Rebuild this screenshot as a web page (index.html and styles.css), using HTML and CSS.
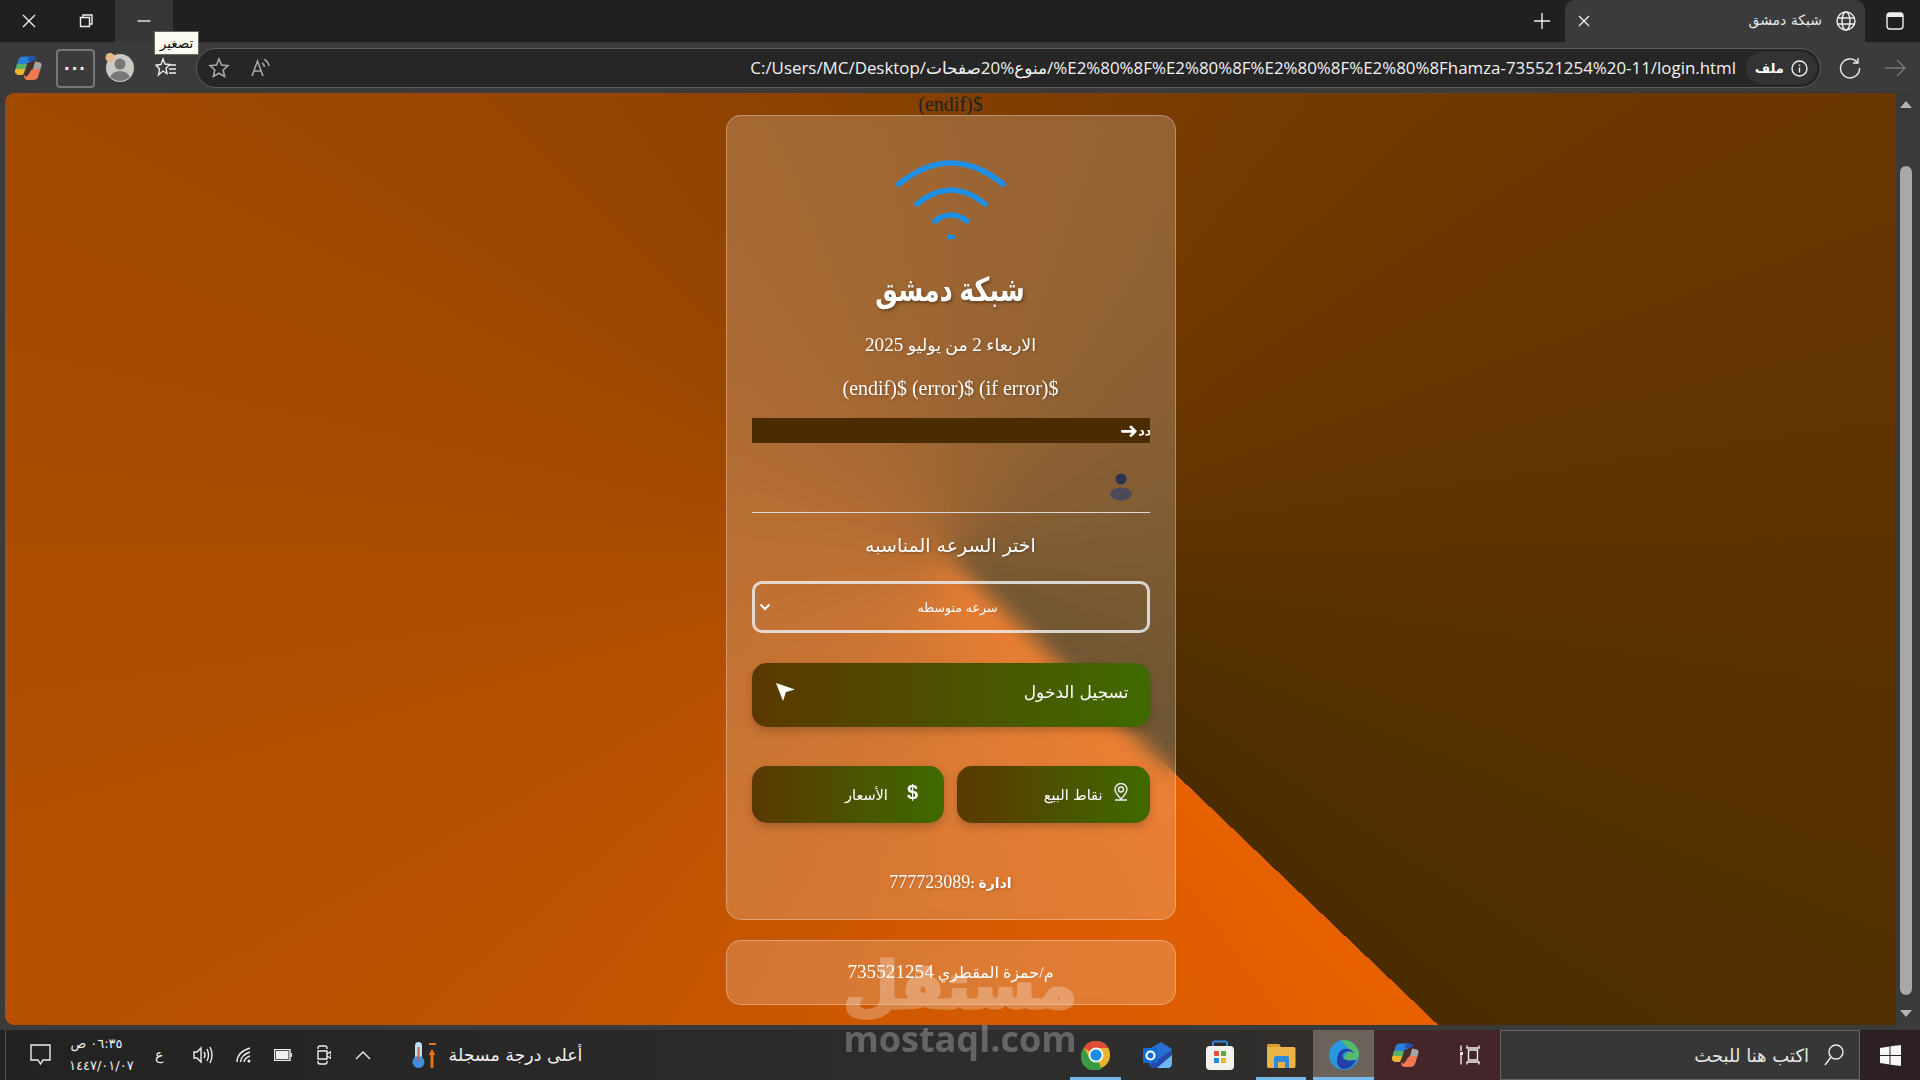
FILE: index.html
```html
<!DOCTYPE html>
<html lang="ar">
<head>
<meta charset="utf-8">
<title>شبكة دمشق</title>
<link rel="stylesheet" href="styles.css">
</head>
<body>
<svg class="defs" width="0" height="0">
  <symbol id="copilot" viewBox="0 0 28 26">
    <path d="M3 9 5 3.500Q6 1.500 8.500 1.500H19Q21.500 1.500 22 4L16 7 12 9Z" fill="#2a7fd8"/>
    <path d="M15 1.500H19Q21.500 1.500 22 4L18 6H14Z" fill="#2450b8"/>
    <path d="M3 9H13L11.500 14H1.500Z" fill="#58b368"/>
    <path d="M1.500 14H11.500L9 20H5Q1 20 .8 16Z" fill="#e8b52e"/>
    <path d="M21 6.500 26 7.500Q28 8 27.500 11L26.500 14H19Z" fill="#a4a4a4"/>
    <path d="M19 14H26.500L24 22Q23 25 19 25H13Q11 25 10 22L11 19Z" fill="#ee7a52"/>
    <path d="M10.500 20 14 8 19 6 21 7 15 19 12 22Z" fill="#4a2f26"/>
  </symbol>
  <symbol id="chrome" viewBox="0 0 32 32">
    <circle cx="16" cy="16" r="15" fill="#e8b52e"/>
    <path d="M3 8.500A15 15 0 0 1 29 8.500H16A7.500 7.500 0 0 0 9.500 12.300Z" fill="#e34a35"/>
    <path d="M3 8.500 9.500 19.800 16 16 22 31A15 15 0 0 1 3 8.500Z" fill="#3c9a45"/>
    <circle cx="16" cy="16" r="8" fill="#f4f6f8"/>
    <circle cx="16" cy="16" r="6" fill="#1c8fe0"/>
  </symbol>
</svg>

<header class="tabstrip">
  <div class="win-btn"><svg width="16" height="16" viewBox="0 0 16 16"><path d="M2 2 14 14M14 2 2 14" class="ln"/></svg></div>
  <div class="win-btn"><svg width="16" height="16" viewBox="0 0 16 16"><path d="M2.500 4.500H11.500V13.500H2.500ZM5 4V2H14V11H12" class="ln"/></svg></div>
  <div class="win-btn is-hover"><svg width="16" height="16" viewBox="0 0 16 16"><path d="M1.500 8H14.500" class="ln"/></svg></div>
  <div class="tab-spacer"></div>
  <svg class="newtab" width="18" height="18" viewBox="0 0 18 18"><path d="M9 1V17M1 9H17" class="ln"/></svg>
  <div class="tab">
    <svg width="12" height="12" viewBox="0 0 12 12"><path d="M1 1 11 11M11 1 1 11" class="ln"/></svg>
    <span class="tab-title">شبكة دمشق</span>
    <svg width="20" height="20" viewBox="0 0 20 20"><g class="ln"><circle cx="10" cy="10" r="9"/><ellipse cx="10" cy="10" rx="4" ry="9"/><path d="M1.500 7H18.500M1.500 13H18.500"/></g></svg>
  </div>
  <div class="tab-actions"><svg width="18" height="18" viewBox="0 0 18 18"><rect x="1" y="1" width="16" height="16" rx="3" class="ln"/><path d="M1 3Q1 1 3 1H15Q17 1 17 3V5H1Z" fill="#eee"/></svg></div>
</header>

<div class="toolbar">
  <svg class="tb-copilot" width="28" height="26"><use href="#copilot"/></svg>
  <div class="more-btn">···</div>
  <div class="profile">
    <svg width="30" height="30" viewBox="0 0 30 30"><circle cx="15" cy="15" r="14" fill="#ccc8c4"/><circle cx="15" cy="11" r="5.500" fill="#777"/><path d="M5 24Q8 18 15 18T25 24Q20 28 15 28T5 24Z" fill="#777"/><circle cx="5" cy="4.500" r="4.500" fill="#e8b98a"/></svg>
  </div>
  <svg class="favs" width="22" height="22" viewBox="0 0 22 22"><path d="M8 2 10 7 15 7.500 11 11 12 16.500 8 14 3.500 18 4.500 12 1 8 6 7.500Z" class="ln"/><path d="M14 8H21M14 12H21M14 16H21" class="ln"/></svg>
  <div class="addr">
    <svg width="22" height="22" viewBox="0 0 22 22"><path d="M11 2 13.600 8 20 8.600 15.200 13 16.600 19.500 11 16.200 5.400 19.500 6.800 13 2 8.600 8.400 8Z" class="ln dim"/></svg>
    <svg class="read" width="20" height="20" viewBox="0 0 20 20"><path d="M1 18 6.500 3 12 18M3 13H10M11 5Q13 6 13.500 9M13 1.500Q17 3 18 8" class="ln dim"/></svg>
    <div class="url" dir="ltr">C:/Users/MC/Desktop/منوع%20صفحات/%E2%80%8F%E2%80%8F%E2%80%8F%E2%80%8Fhamza-735521254%20-11/login.html</div>
    <div class="file-pill">
      <span class="file-label">ملف</span>
      <svg width="17" height="17" viewBox="0 0 17 17"><circle cx="8.500" cy="8.500" r="7.500" class="ln"/><path d="M8.500 7.500V12.500M8.500 4.500V6" class="ln"/></svg>
    </div>
  </div>
  <svg class="refresh" width="22" height="22" viewBox="0 0 22 22"><path d="M18 5A9.500 9.500 0 1 0 20.500 11M19 1V6H14" class="ln"/></svg>
  <svg class="forward" width="22" height="18" viewBox="0 0 22 18"><path d="M1 9H21M13 1 21 9 13 17" class="ln gray"/></svg>
</div>

<div class="stage">
  <main class="page">
    <div class="stray">(endif)$</div>
    <section class="card">
      <svg class="wifi" width="120" height="90" viewBox="0 0 120 90">
        <g class="wifi-arcs">
          <path d="M8 29Q60 -13 112 29"/>
          <path d="M26 49Q60 21 94 49"/>
          <path d="M44 66Q60 54 76 66"/>
        </g>
        <ellipse cx="60" cy="82" rx="4.500" ry="2.500" fill="#1e90e6"/>
      </svg>
      <h1 class="title"><span class="title-text">شبكة دمشق</span></h1>
      <p class="date">الاربعاء <span class="num">2</span> من يوليو <span class="num">2025</span></p>
      <p class="errors" dir="ltr">(endif)$ (error)$ (if error)$</p>
      <div class="ticker"><span class="ticker-arrow">➜</span><span class="ticker-text">دد</span></div>
      <div class="field">
        <svg width="24" height="30" viewBox="0 0 24 30"><circle cx="12" cy="7" r="5.500" fill="#2e3350"/><ellipse cx="12" cy="22" rx="11" ry="6.500" fill="#4a4a5a"/></svg>
      </div>
      <div class="speed-label">اختر السرعه المناسبه</div>
      <div class="select">
        <svg class="chev" width="12" height="8" viewBox="0 0 12 8"><path d="M1.500 1.500 6 6 10.500 1.500" fill="none" stroke="#fff" stroke-width="2"/></svg>
        <span class="select-text">سرعه متوسطه</span>
      </div>
      <div class="btn btn-login">
        <svg width="20" height="20" viewBox="0 0 20 20"><path d="M1 1 20 7.500 11 10 8 19Z" fill="#fff"/></svg>
        <span>تسجيل الدخول</span>
      </div>
      <div class="btn-row">
        <div class="btn btn-small btn-prices">
          <span class="dollar">$</span>
          <span class="btn-label">الأسعار</span>
        </div>
        <div class="btn btn-small btn-points">
          <svg class="pin" width="16" height="18" viewBox="0 0 16 18"><path d="M8 16Q2 9.500 2 6.500A6 6 0 0 1 14 6.500Q14 9.500 8 16ZM2 17H14" class="ln"/><circle cx="8" cy="6.500" r="2.500" class="ln"/></svg>
          <span class="btn-label">نقاط البيع</span>
        </div>
      </div>
      <div class="admin">ادارة :<span class="admin-num">777723089</span></div>
    </section>
    <section class="card card-foot">م/حمزة المقطري <span class="num">735521254</span></section>
  </main>
  <aside class="scrollbar">
    <span class="sb-up"></span>
    <span class="sb-thumb"></span>
    <span class="sb-down"></span>
  </aside>
</div>

<footer class="taskbar">
  <div class="tray">
    <svg class="t-note" width="21" height="22" viewBox="0 0 21 22"><path d="M1 1H20V16H13L10.500 20 8 16H1Z" class="ln"/></svg>
    <div class="clock"><div dir="rtl">٠٦:٣٥ ص</div><div dir="ltr">١٤٤٧/٠١/٠٧</div></div>
    <span class="lang">ع</span>
    <svg class="t-vol" width="20" height="20" viewBox="0 0 20 20"><path d="M1 7H4L8 3V17L4 13H1ZM11 7Q13 10 11 13M14 4Q17 10 14 16M17 2Q21 10 17 18" class="ln"/></svg>
    <svg class="t-wifi" width="15" height="16" viewBox="0 0 15 16"><path d="M1 15Q1 5 14 1M4.500 15Q5 8 14 5M8 15Q8.500 11 14 9" class="ln"/><circle cx="13" cy="14" r="1.500" fill="#eee"/></svg>
    <svg class="t-bat" width="18" height="12" viewBox="0 0 18 12"><rect x=".5" y=".5" width="15.500" height="11" class="ln"/><rect x="2" y="2" width="12.500" height="8" fill="#eee"/><rect x="16.500" y="4" width="1.500" height="4" fill="#eee"/></svg>
    <svg class="t-cam" width="14" height="20" viewBox="0 0 14 20"><path d="M1 4V3Q1 1 3 1H8Q10 1 10 3V4M1 16V17Q1 19 3 19H8Q10 19 10 17V16M1 6H10V14H1ZM10 9 14 6.500V13.500L10 11" class="ln"/></svg>
    <svg class="t-up" width="16" height="9" viewBox="0 0 16 9"><path d="M1 8 8 1 15 8" class="ln"/></svg>
    <svg class="t-therm" width="27" height="28" viewBox="0 0 27 28"><rect x="3" y="1" width="7" height="20" rx="3.500" fill="#b9e0f5"/><circle cx="6.500" cy="21" r="6" fill="#3a8fe0"/><rect x="5.500" y="6" width="2" height="14" fill="#d8623c"/><path d="M20 8 23.500 14H21.500V27H18.500V14H16.500ZM17 2H24V4H17Z" fill="#e8721c"/></svg>
    <span class="weather">أعلى درجة مسجلة</span>
  </div>
  <div class="apps">
    <div class="app app-chrome is-open"><svg width="30" height="30"><use href="#chrome"/></svg></div>
    <div class="app app-outlook">
      <svg width="30" height="28" viewBox="0 0 30 28"><path d="M6 8 18 1 29 8V22Q29 27 24 27H11Q6 27 6 22Z" fill="#2a6fd0"/><path d="M29 9V14L14 27H11Q8 27 6.500 24Z" fill="#2748a8"/><path d="M29 14V22Q29 27 24 27H14Z" fill="#6db8ee"/><rect x="0" y="7" width="15" height="15" rx="1.500" fill="#0f6cd0"/><circle cx="7.500" cy="14.500" r="4" fill="none" stroke="#fff" stroke-width="2.200"/></svg>
    </div>
    <div class="app app-store">
      <svg width="30" height="30" viewBox="0 0 30 30"><path d="M8 7V3Q8 1.500 10 1.500H20Q22 1.500 22 3V7" fill="none" stroke="#2d84d8" stroke-width="2"/><rect x="1" y="6" width="28" height="24" rx="4" fill="#f3f1ec"/><rect x="9" y="11" width="5" height="5" fill="#e2533a"/><rect x="16" y="11" width="5" height="5" fill="#5ca83c"/><rect x="9" y="18" width="5" height="5" fill="#1f8ae0"/><rect x="16" y="18" width="5" height="5" fill="#e8b52e"/></svg>
    </div>
    <div class="app app-folder is-open">
      <svg width="30" height="26" viewBox="0 0 30 26"><path d="M1 4Q1 2 3 2H13L15 5H28Q29.500 5 29.500 7V24Q29.500 26 28 26H3Q1 26 1 24Z" fill="#eeb44a"/><path d="M1 2.500H13L14 5H1Z" fill="#d89a26"/><path d="M8 26V16Q8 14 10 14H21Q23 14 23 16V26H19V20H12V26Z" fill="#2f8ad8"/></svg>
    </div>
    <div class="app app-edge is-open">
      <svg width="30" height="30" viewBox="0 0 30 30"><circle cx="15" cy="15" r="15" fill="#2a96e0"/><path d="M12 .5A15 15 0 0 1 30 14Q30 20 24 20H15Q15 12 22 11 18 7 12 .5Z" fill="#55bb6c"/><path d="M8 21Q8 11 15 9 22 8 25 13 19 9.500 15 13 12 16 15 19 19 22 27 20 23 29 14 29 8 27 8 21Z" fill="#2340a8"/></svg>
    </div>
    <div class="app app-copilot"><svg width="28" height="26"><use href="#copilot"/></svg></div>
    <div class="app app-tasks"><svg width="20" height="20" viewBox="0 0 20 20"><path d="M1 .5V6M1 10V19.500M7 .5V3H19V.5M7 19.500V17H19V19.500M8.500 5H17.500V15H8.500Z" class="ln"/><rect x="0" y="7" width="3" height="3" fill="#eee"/></svg></div>
    <div class="search">
      <svg width="20" height="22" viewBox="0 0 20 22"><circle cx="12" cy="8" r="7" class="ln"/><path d="M7 13 1 21" class="ln"/></svg>
      <span>اكتب هنا للبحث</span>
    </div>
    <div class="start"><svg width="21" height="21" viewBox="0 0 21 21"><path d="M0 3 9.500 1.500V10H0ZM10.500 1.300 21 0V10H10.500ZM0 11H9.500V19.500L0 18ZM10.500 11H21V21L10.500 19.700Z" fill="#f6f6f6"/></svg></div>
  </div>
</footer>

<div class="tooltip">تصغير</div>
<div class="watermark"><div class="wm-ar">مستقل</div><div class="wm-en">mostaql.com</div></div>
</body>
</html>
```

FILE: styles.css
```css
* { box-sizing: border-box; }
html, body { margin: 0; height: 100%; overflow: hidden; }
body {
  position: relative;
  width: 1920px;
  height: 1080px;
  background: #3b3b3b;
  display: flex;
  flex-direction: column;
  font-family: "Liberation Sans", "DejaVu Sans", sans-serif;
  color: #fff;
}
.defs { position: absolute; }
.ln { fill: none; stroke: #eee; stroke-width: 1.400; }
g.ln * { fill: none; }
.dim { stroke: #a8a8a8; stroke-width: 1.600; }
.gray { stroke: #777; }
.num { font-size: 19.200px; }

/* tab strip */
.tabstrip { height: 42px; flex: none; background: #202020; display: flex; align-items: stretch; }
.win-btn { width: 57.500px; display: flex; align-items: center; justify-content: center; }
.is-hover { background: #373737; }
.tab-spacer { flex: 1; }
.newtab { align-self: center; margin-right: 14px; }
.tab {
  width: 300px;
  background: #3b3b3b;
  border-radius: 10px 10px 0 0;
  display: flex;
  align-items: center;
  padding: 0 9px 0 13px;
}
.tab-title { margin-left: auto; margin-right: 14px; font-family: "DejaVu Sans", sans-serif; font-size: 14px; line-height: 18px; padding-bottom: 2px; color: #e8e8e8; }
.tab-actions { width: 55px; display: flex; align-items: center; justify-content: center; padding-left: 4px; }

/* toolbar */
.toolbar { height: 51px; flex: none; display: flex; align-items: center; padding-top: 1px; }
.tb-copilot { margin-left: 14px; }
.more-btn {
  width: 39px; height: 39px; margin-left: 14px;
  border: 2px solid #777; border-radius: 4px;
  display: flex; align-items: center; justify-content: center;
  font-size: 20px; font-weight: bold; letter-spacing: 1px; color: #eee;
}
.profile { margin-left: 10px; height: 30px; }
.favs { margin-left: 20px; }
.addr {
  margin-left: 19px;
  width: 1625px; height: 40px;
  background: #262626;
  border: 1px solid #5c5c5c;
  border-radius: 20px;
  display: flex; align-items: center;
  padding: 0 3px 0 11px;
}
.read { margin-left: 21px; }
.url { margin-left: auto; padding-bottom: 2px; font-family: "Open Sans", "DejaVu Sans", sans-serif; font-size: 16.900px; color: #f2f2f2; white-space: nowrap; }
.file-pill {
  margin-left: 10px; height: 32px; width: 71px;
  background: #333; border-radius: 16px;
  display: flex; align-items: center; justify-content: center; gap: 7px;
  font-family: "DejaVu Sans", sans-serif; font-size: 13px; font-weight: bold;
}
.refresh { margin-left: 18px; }
.forward { margin-left: 23px; }

/* page */
.stage { height: 932px; flex: none; display: flex; padding-left: 5px; }
.page {
  width: 1891px;
  overflow: hidden;
  border-radius: 9px 0 0 9px;
  background: conic-gradient(from 133.7deg, #e66000, #4a2c00);
  display: flex; flex-direction: column; align-items: center;
  font-family: "Liberation Serif", "DejaVu Sans", serif;
}
.stray { height: 22px; line-height: 22px; font-size: 20px; color: #222; }
.card {
  width: 450px;
  padding: 39px 25px 25px;
  background: rgba(255, 255, 255, .2);
  -webkit-backdrop-filter: blur(10px);
  backdrop-filter: blur(10px);
  border: 1px solid rgba(255, 255, 255, .3);
  border-radius: 15px;
  text-align: center;
  display: flex; flex-direction: column;
  flex: none;
}
.wifi { display: block; align-self: center; }
.wifi-arcs path { fill: none; stroke: #1e90e6; stroke-width: 5.500; stroke-linecap: round; }
.title { margin: 23px 0 0; height: 44px; line-height: 44px; font-size: 33px; font-weight: bold; }
.title-text { display: inline-block; transform: scaleX(.77); text-shadow: 2px 2px 4px rgba(0,0,0,.35); }
.date { margin: 21px 0 0; height: 24px; line-height: 24px; font-size: 17.400px; text-shadow: 1px 1px 3px rgba(0,0,0,.25); }
.errors { margin: 19px 0 0; height: 24px; line-height: 24px; font-size: 20px; text-shadow: 1px 1px 3px rgba(0,0,0,.3); }
.ticker {
  margin-top: 18px; height: 25px; background: #4a2c00; overflow: hidden;
  display: flex; align-items: center; justify-content: flex-end;
  font-family: "DejaVu Sans", sans-serif; font-size: 13px; font-weight: bold;
}
.ticker-arrow { font-size: 22px; line-height: 1; }
.ticker-text { margin-right: -2px; }
.field { height: 70px; border-bottom: 1px solid #d8d8d8; display: flex; justify-content: flex-end; align-items: flex-end; padding: 0 17px 10px 0; }
.speed-label { margin-top: 20px; height: 24px; line-height: 24px; font-family: "DejaVu Sans", sans-serif; font-size: 19px; text-shadow: 1px 1px 3px rgba(0,0,0,.3); }
.select {
  margin-top: 24px; height: 52px;
  border: 3px solid rgba(235,235,235,.85); border-radius: 10px;
  display: flex; align-items: center; padding-left: 4px;
  font-family: "DejaVu Sans", sans-serif; font-size: 12.500px;
}
.select-text { margin-left: 147px; }
.btn {
  background: linear-gradient(90deg, #5a3800, #3f6a00);
  border-radius: 15px;
  box-shadow: 0 4px 8px rgba(0,0,0,.2);
  display: flex; align-items: center;
}
.btn-login {
  margin-top: 30px; height: 64px;
  justify-content: space-between;
  padding: 0 21px 6px 23px;
  font-family: "DejaVu Sans", sans-serif; font-size: 17px;
}
.btn-row { margin-top: 39px; height: 57px; display: grid; grid-template-columns: 1fr 1fr; gap: 13px; }
.btn-small {
  flex-direction: row-reverse; justify-content: flex-start;
  font-family: "DejaVu Sans", sans-serif; font-size: 14.500px;
}
.btn-points { padding-right: 21px; gap: 10px; }
.btn-prices { padding-right: 26px; gap: 19px; }
.pin { margin-bottom: 5px; }
.btn-label { padding-top: 1px; }
.dollar { font-family: "Liberation Sans", sans-serif; font-size: 20px; font-weight: bold; padding-bottom: 4px; }
.admin { margin-top: 47px; height: 24px; line-height: 24px; font-size: 14px; font-weight: bold; text-shadow: 1px 1px 3px rgba(0,0,0,.25); }
.admin-num { font-size: 18px; font-weight: normal; }
.card-foot { margin-top: 20px; height: 65px; padding: 17px 0 0; line-height: 28px; font-size: 16px; display: block; }

/* scrollbar */
.scrollbar { width: 19px; background: #3a3a3a; border-radius: 0 8px 0 0; position: relative; display: flex; flex-direction: column; align-items: center; }
.sb-up { margin-top: 8px; width: 0; height: 0; border: 6.500px solid transparent; border-top: 0; border-bottom: 7px solid #b4b4b4; }
.sb-thumb { margin-top: 58px; width: 12px; height: 829px; background: #a9a9a9; border-radius: 6px; }
.sb-down { margin-top: 15px; width: 0; height: 0; border: 6.500px solid transparent; border-bottom: 0; border-top: 7px solid #b4b4b4; }

/* taskbar */
.taskbar {
  margin-top: 5px; height: 50px; flex: none;
  background: linear-gradient(90deg, #222 0, #2d2d2d 50%, #2f2e2d 64%, #332f2c 68%, #44252a 72%);
  display: flex; align-items: center;
}
.tray {
  margin-left: 5px; height: 100%;
  border-left: 1px solid #555;
  display: flex; align-items: center;
  padding-left: 24px;
  font-family: "DejaVu Sans", sans-serif; font-size: 13px; color: #eee;
}
.clock { width: 55px; margin-left: 18px; font-size: 13px; line-height: 22px; text-align: center; white-space: nowrap; }
.lang { width: 10px; margin-left: 31px; font-size: 14px; }
.t-vol { margin-left: 28px; }
.t-wifi, .t-bat { margin-left: 23px; }
.t-cam { margin-left: 25px; }
.t-up { margin-left: 24px; }
.t-therm { margin-left: 41px; }
.weather { margin-left: 8px; width: 137px; font-size: 17.400px; white-space: nowrap; text-align: center; }
.apps { margin-left: auto; height: 100%; display: flex; align-items: stretch; }
.app { display: flex; align-items: center; justify-content: center; padding-top: 2px; border-bottom: 3px solid transparent; width: 51px; margin-right: 11px; }
.is-open { border-bottom-color: #76b9ed; }
.app-folder { width: 50px; margin-right: 7px; }
.app-edge { width: 61px; margin-right: 0; background: #6b635a; }
.app-copilot { width: 62px; margin-right: 0; }
.app-tasks { width: 64px; margin-right: 0; padding-left: 4px; }
.search {
  width: 360px; background: #373737; border: 1px solid #666;
  display: flex; flex-direction: row-reverse; align-items: center; justify-content: flex-start; gap: 15px;
  padding-right: 15px;
  font-family: "DejaVu Sans", sans-serif; font-size: 18px; color: #e6e6e6;
}
.start { width: 60px; background: #2d2024; display: flex; align-items: center; justify-content: center; }

/* overlays */
.tooltip {
  position: absolute; left: 154px; top: 31px; width: 45px; height: 24px;
  background: #fbfbf2; border: 1px solid #666; color: #111;
  font-family: "DejaVu Sans", sans-serif; font-size: 13.500px; line-height: 22px; text-align: center; white-space: nowrap;
}
.watermark { position: absolute; left: 830px; top: 953px; width: 260px; text-align: center; color: #fff; opacity: .27; pointer-events: none; }
.wm-ar { height: 66px; line-height: 66px; font-family: "DejaVu Sans", sans-serif; font-size: 64px; font-weight: bold; -webkit-text-stroke: 3px #fff; }
.wm-en { height: 40px; line-height: 40px; font-family: "Open Sans", sans-serif; font-size: 36px; font-weight: 700; white-space: nowrap; }
```
